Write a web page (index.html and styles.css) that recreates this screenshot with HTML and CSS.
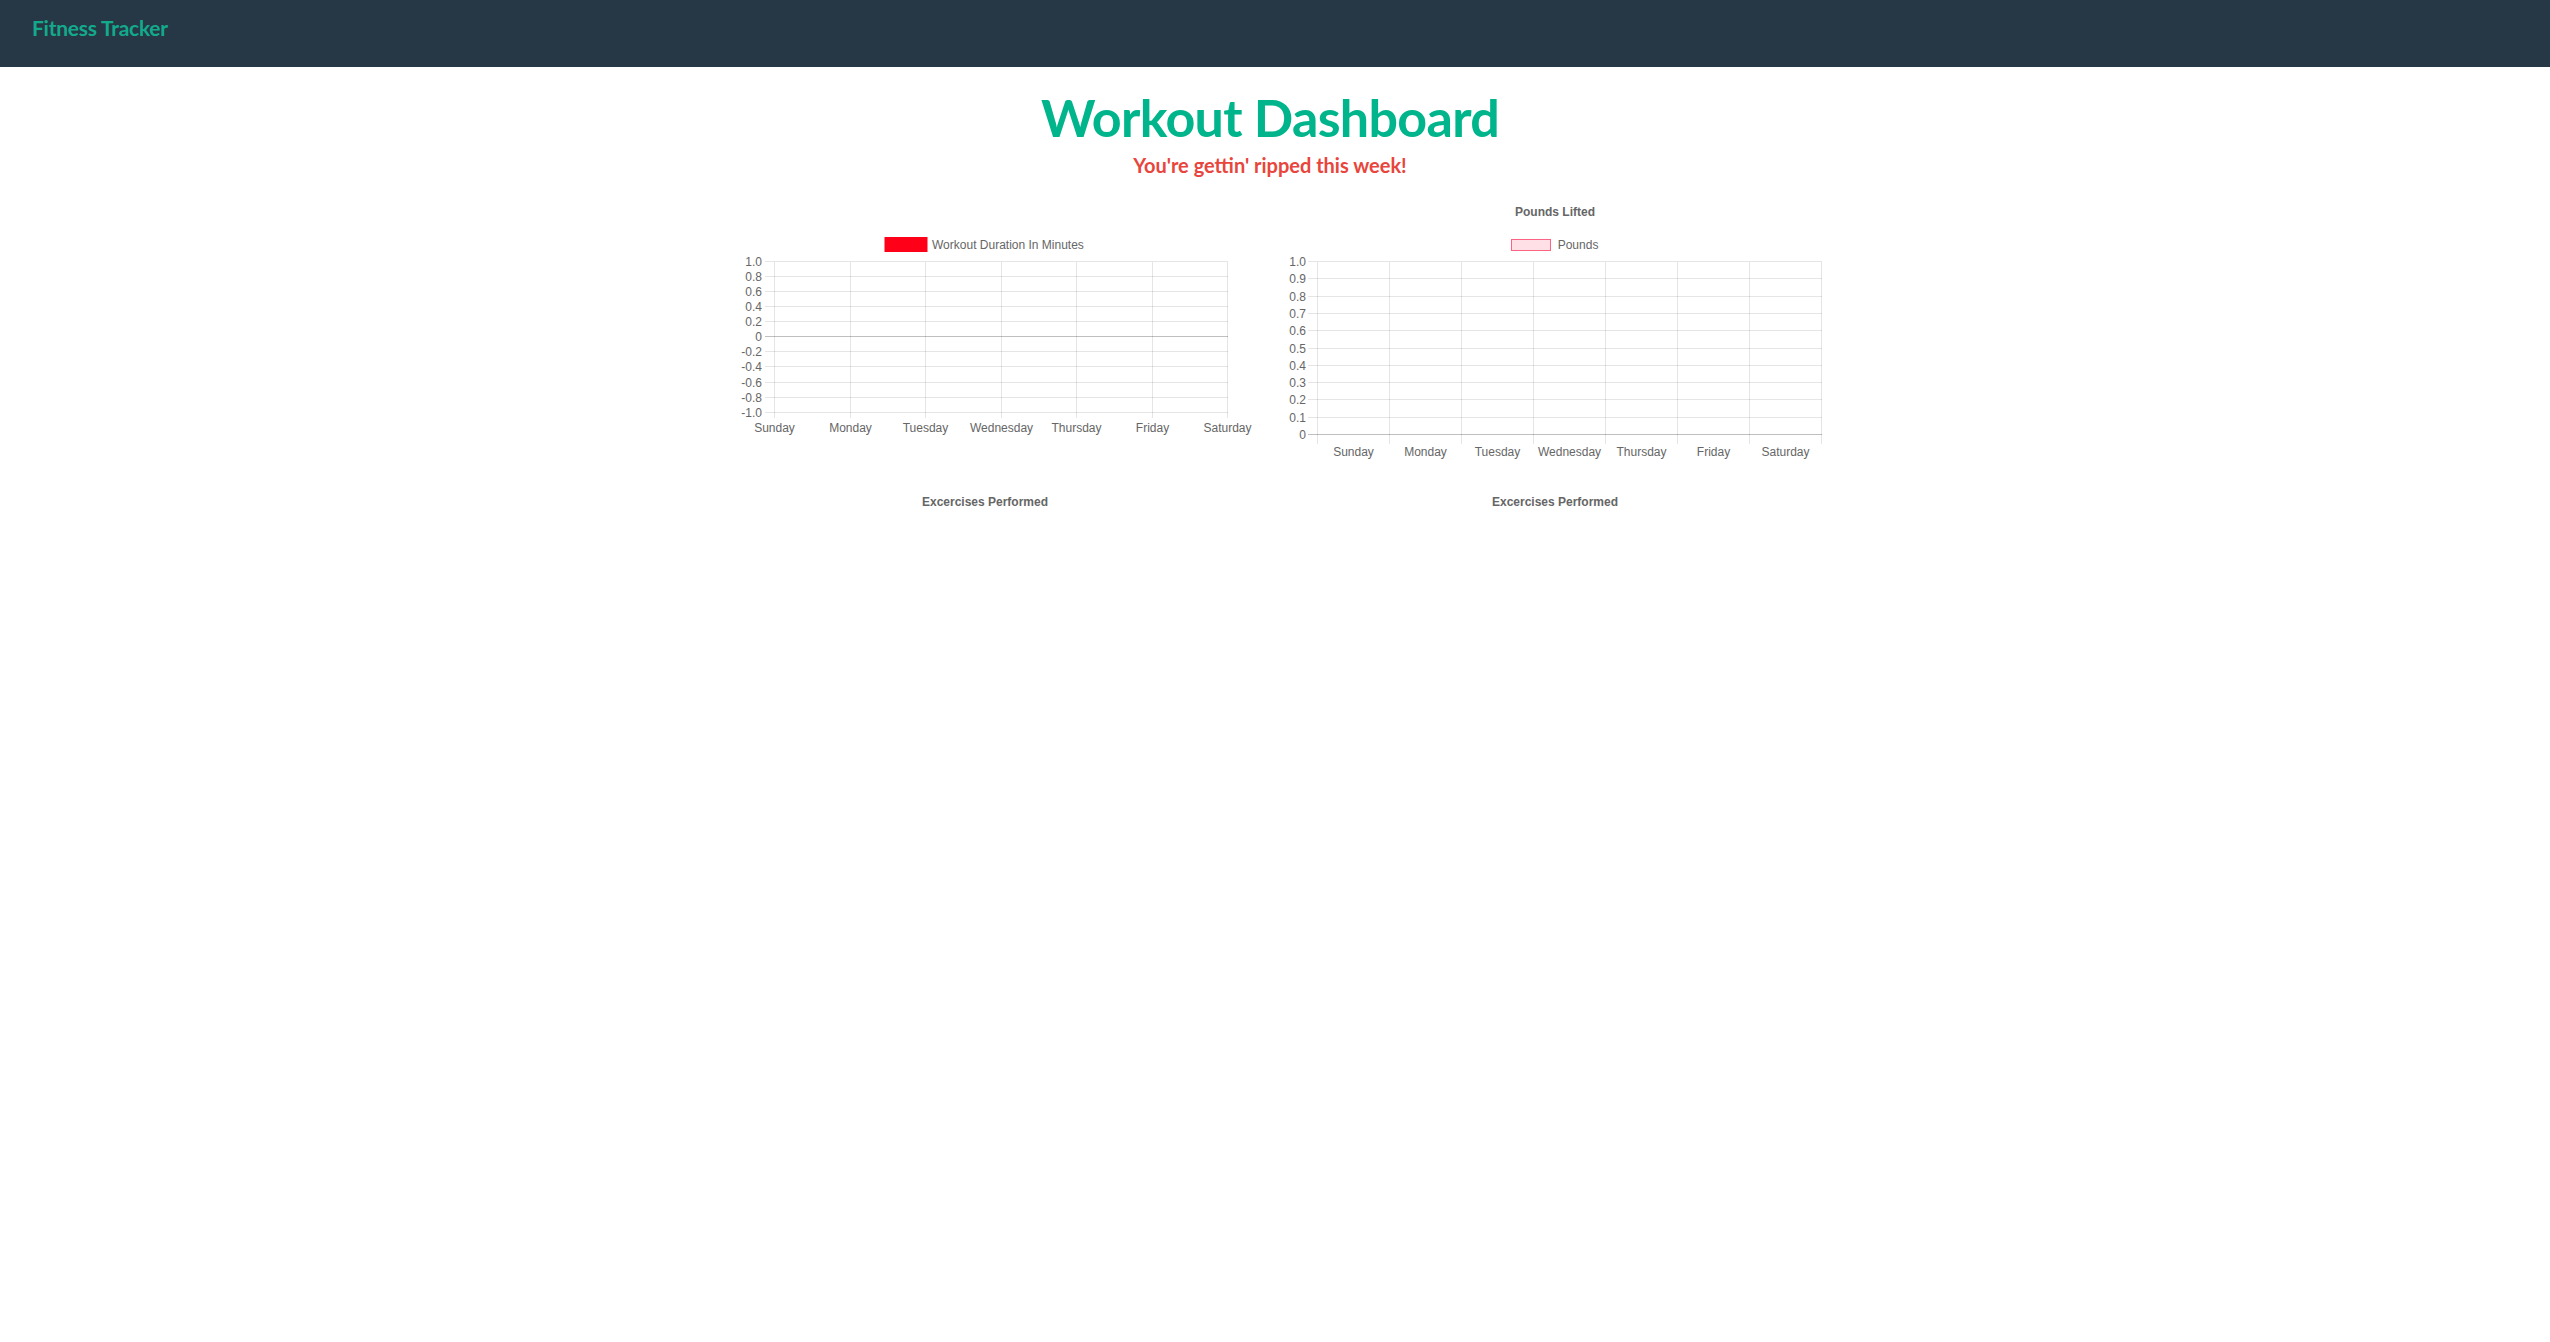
FILE: index.html
```html
<!DOCTYPE html>
<html lang="en">
<head>
<meta charset="utf-8">
<title>Fitness Tracker</title>
<link rel="stylesheet" href="styles.css">
</head>
<body>
<nav class="navbar"><span class="brand">Fitness Tracker</span></nav>
<main class="page">
  <div class="container">
    <header class="hero">
      <h1 class="hero-title">Workout Dashboard</h1>
      <h4 class="hero-sub">You're gettin' ripped this week!</h4>
    </header>

    <div class="row">
      <div class="col">
        <svg class="chart" viewBox="0 0 540 270" width="540" height="270">
          <g class="legend">
            <rect class="swatch-red" x="171" y="44.5" width="40" height="12"/>
            <text x="217" y="51">Workout Duration In Minutes</text>
          </g>
          <g class="grid">
            <line x1="59.5" y1="67.5" x2="59.5" y2="223.5"/>
            <line x1="135.5" y1="67.5" x2="135.5" y2="223.5"/>
            <line x1="210.5" y1="67.5" x2="210.5" y2="223.5"/>
            <line x1="286.5" y1="67.5" x2="286.5" y2="223.5"/>
            <line x1="361.5" y1="67.5" x2="361.5" y2="223.5"/>
            <line x1="437.5" y1="67.5" x2="437.5" y2="223.5"/>
            <line x1="512.5" y1="67.5" x2="512.5" y2="223.5"/>
            <line x1="49.5" y1="67.5" x2="512.5" y2="67.5"/>
            <line x1="49.5" y1="82.5" x2="512.5" y2="82.5"/>
            <line x1="49.5" y1="97.5" x2="512.5" y2="97.5"/>
            <line x1="49.5" y1="112.5" x2="512.5" y2="112.5"/>
            <line x1="49.5" y1="127.5" x2="512.5" y2="127.5"/>
            <line class="zero" x1="49.5" y1="142.5" x2="512.5" y2="142.5"/>
            <line x1="49.5" y1="157.5" x2="512.5" y2="157.5"/>
            <line x1="49.5" y1="172.5" x2="512.5" y2="172.5"/>
            <line x1="49.5" y1="188.5" x2="512.5" y2="188.5"/>
            <line x1="49.5" y1="203.5" x2="512.5" y2="203.5"/>
            <line x1="49.5" y1="218.5" x2="512.5" y2="218.5"/>
          </g>
          <g class="ylabels">
            <text x="47" y="67.5">1.0</text>
            <text x="47" y="82.5">0.8</text>
            <text x="47" y="97.5">0.6</text>
            <text x="47" y="112.5">0.4</text>
            <text x="47" y="127.5">0.2</text>
            <text x="47" y="142.5">0</text>
            <text x="47" y="157.5">-0.2</text>
            <text x="47" y="172.5">-0.4</text>
            <text x="47" y="188.5">-0.6</text>
            <text x="47" y="203.5">-0.8</text>
            <text x="47" y="218.5">-1.0</text>
          </g>
          <g class="xlabels">
            <text x="59.5" y="234.3">Sunday</text>
            <text x="135.5" y="234.3">Monday</text>
            <text x="210.5" y="234.3">Tuesday</text>
            <text x="286.5" y="234.3">Wednesday</text>
            <text x="361.5" y="234.3">Thursday</text>
            <text x="437.5" y="234.3">Friday</text>
            <text x="512.5" y="234.3">Saturday</text>
          </g>
        </svg>
      </div>

      <div class="col">
        <svg class="chart" viewBox="0 0 540 270" width="540" height="270">
          <text class="chart-title" x="270" y="17.7">Pounds Lifted</text>
          <g class="legend">
            <rect class="swatch-pink" x="226.5" y="45.5" width="39" height="11"/>
            <text x="272.7" y="51">Pounds</text>
          </g>
          <g class="grid">
            <line x1="32.5" y1="67.5" x2="32.5" y2="250"/>
            <line x1="104.5" y1="67.5" x2="104.5" y2="250"/>
            <line x1="176.5" y1="67.5" x2="176.5" y2="250"/>
            <line x1="248.5" y1="67.5" x2="248.5" y2="250"/>
            <line x1="320.5" y1="67.5" x2="320.5" y2="250"/>
            <line x1="392.5" y1="67.5" x2="392.5" y2="250"/>
            <line x1="464.5" y1="67.5" x2="464.5" y2="250"/>
            <line x1="536.5" y1="67.5" x2="536.5" y2="250"/>
            <line x1="22.5" y1="67.5" x2="536.5" y2="67.5"/>
            <line x1="22.5" y1="84.5" x2="536.5" y2="84.5"/>
            <line x1="22.5" y1="102.5" x2="536.5" y2="102.5"/>
            <line x1="22.5" y1="119.5" x2="536.5" y2="119.5"/>
            <line x1="22.5" y1="136.5" x2="536.5" y2="136.5"/>
            <line x1="22.5" y1="154.5" x2="536.5" y2="154.5"/>
            <line x1="22.5" y1="171.5" x2="536.5" y2="171.5"/>
            <line x1="22.5" y1="188.5" x2="536.5" y2="188.5"/>
            <line x1="22.5" y1="205.5" x2="536.5" y2="205.5"/>
            <line x1="22.5" y1="223.5" x2="536.5" y2="223.5"/>
            <line class="zero" x1="22.5" y1="240.5" x2="536.5" y2="240.5"/>
          </g>
          <g class="ylabels">
            <text x="21" y="67.5">1.0</text>
            <text x="21" y="84.5">0.9</text>
            <text x="21" y="102.5">0.8</text>
            <text x="21" y="119.5">0.7</text>
            <text x="21" y="136.5">0.6</text>
            <text x="21" y="154.5">0.5</text>
            <text x="21" y="171.5">0.4</text>
            <text x="21" y="188.5">0.3</text>
            <text x="21" y="205.5">0.2</text>
            <text x="21" y="223.5">0.1</text>
            <text x="21" y="240.5">0</text>
          </g>
          <g class="xlabels">
            <text x="68.5" y="257.7">Sunday</text>
            <text x="140.5" y="257.7">Monday</text>
            <text x="212.5" y="257.7">Tuesday</text>
            <text x="284.5" y="257.7">Wednesday</text>
            <text x="356.5" y="257.7">Thursday</text>
            <text x="428.5" y="257.7">Friday</text>
            <text x="500.5" y="257.7">Saturday</text>
          </g>
        </svg>
      </div>
    </div>

    <div class="row row-second">
      <div class="col">
        <svg class="chart" viewBox="0 0 540 270" width="540" height="270">
          <text class="chart-title" x="270" y="17.7">Excercises Performed</text>
        </svg>
      </div>
      <div class="col">
        <svg class="chart" viewBox="0 0 540 270" width="540" height="270">
          <text class="chart-title" x="270" y="17.7">Excercises Performed</text>
        </svg>
      </div>
    </div>
  </div>
</main>
</body>
</html>
```
FILE: styles.css
```css
html, body {
  margin: 0;
  padding: 0;
  background: #ffffff;
}

body {
  font-family: Lato, "Open Sans", "Liberation Sans", sans-serif;
}

.navbar {
  box-sizing: border-box;
  height: 67px;
  background: #263746;
  padding: 15.3px 0 0 32px;
}

.brand {
  display: block;
  font-family: Lato, "Liberation Sans", sans-serif;
  font-weight: 700;
  font-size: 21px;
  line-height: 25.2px;
  letter-spacing: -0.25px;
  color: #13a98b;
}

.page {
  padding-right: 10px;
}

.container {
  box-sizing: border-box;
  max-width: 1140px;
  margin: 0 auto;
  padding: 0 15px;
}

.hero {
  text-align: center;
  padding-top: 18.9px;
}

.hero-title {
  margin: 0;
  font-family: Lato, "Liberation Sans", sans-serif;
  font-weight: 700;
  font-size: 52px;
  line-height: 62.4px;
  letter-spacing: -0.7px;
  color: #00b48c;
}

.hero-sub {
  margin: 4.5px 0 0;
  font-family: Lato, "Liberation Sans", sans-serif;
  font-weight: 700;
  font-size: 20px;
  line-height: 24px;
  color: #e8453c;
}

.row {
  display: grid;
  grid-template-columns: 540px 540px;
  column-gap: 30px;
  margin-top: 17.2px;
}

.row-second {
  margin-top: 20.3px;
}

.chart {
  display: block;
  width: 540px;
  height: 270px;
  overflow: visible;
}

.chart text {
  font-family: "Liberation Sans", Arial, Helvetica, sans-serif;
  font-size: 12px;
  fill: #666666;
  dominant-baseline: central;
}

.chart .chart-title {
  font-weight: 700;
  text-anchor: middle;
}

.grid line {
  stroke: rgba(0, 0, 0, 0.1);
  stroke-width: 1;
  shape-rendering: crispEdges;
}

.grid line.zero {
  stroke: rgba(0, 0, 0, 0.25);
}

.ylabels text {
  text-anchor: end;
}

.xlabels text {
  text-anchor: middle;
}

.swatch-red {
  fill: #ff0019;
  stroke: #ff0019;
  stroke-width: 3;
}

.swatch-pink {
  fill: rgba(255, 99, 132, 0.2);
  stroke: rgb(255, 99, 132);
  stroke-width: 1;
}
```
